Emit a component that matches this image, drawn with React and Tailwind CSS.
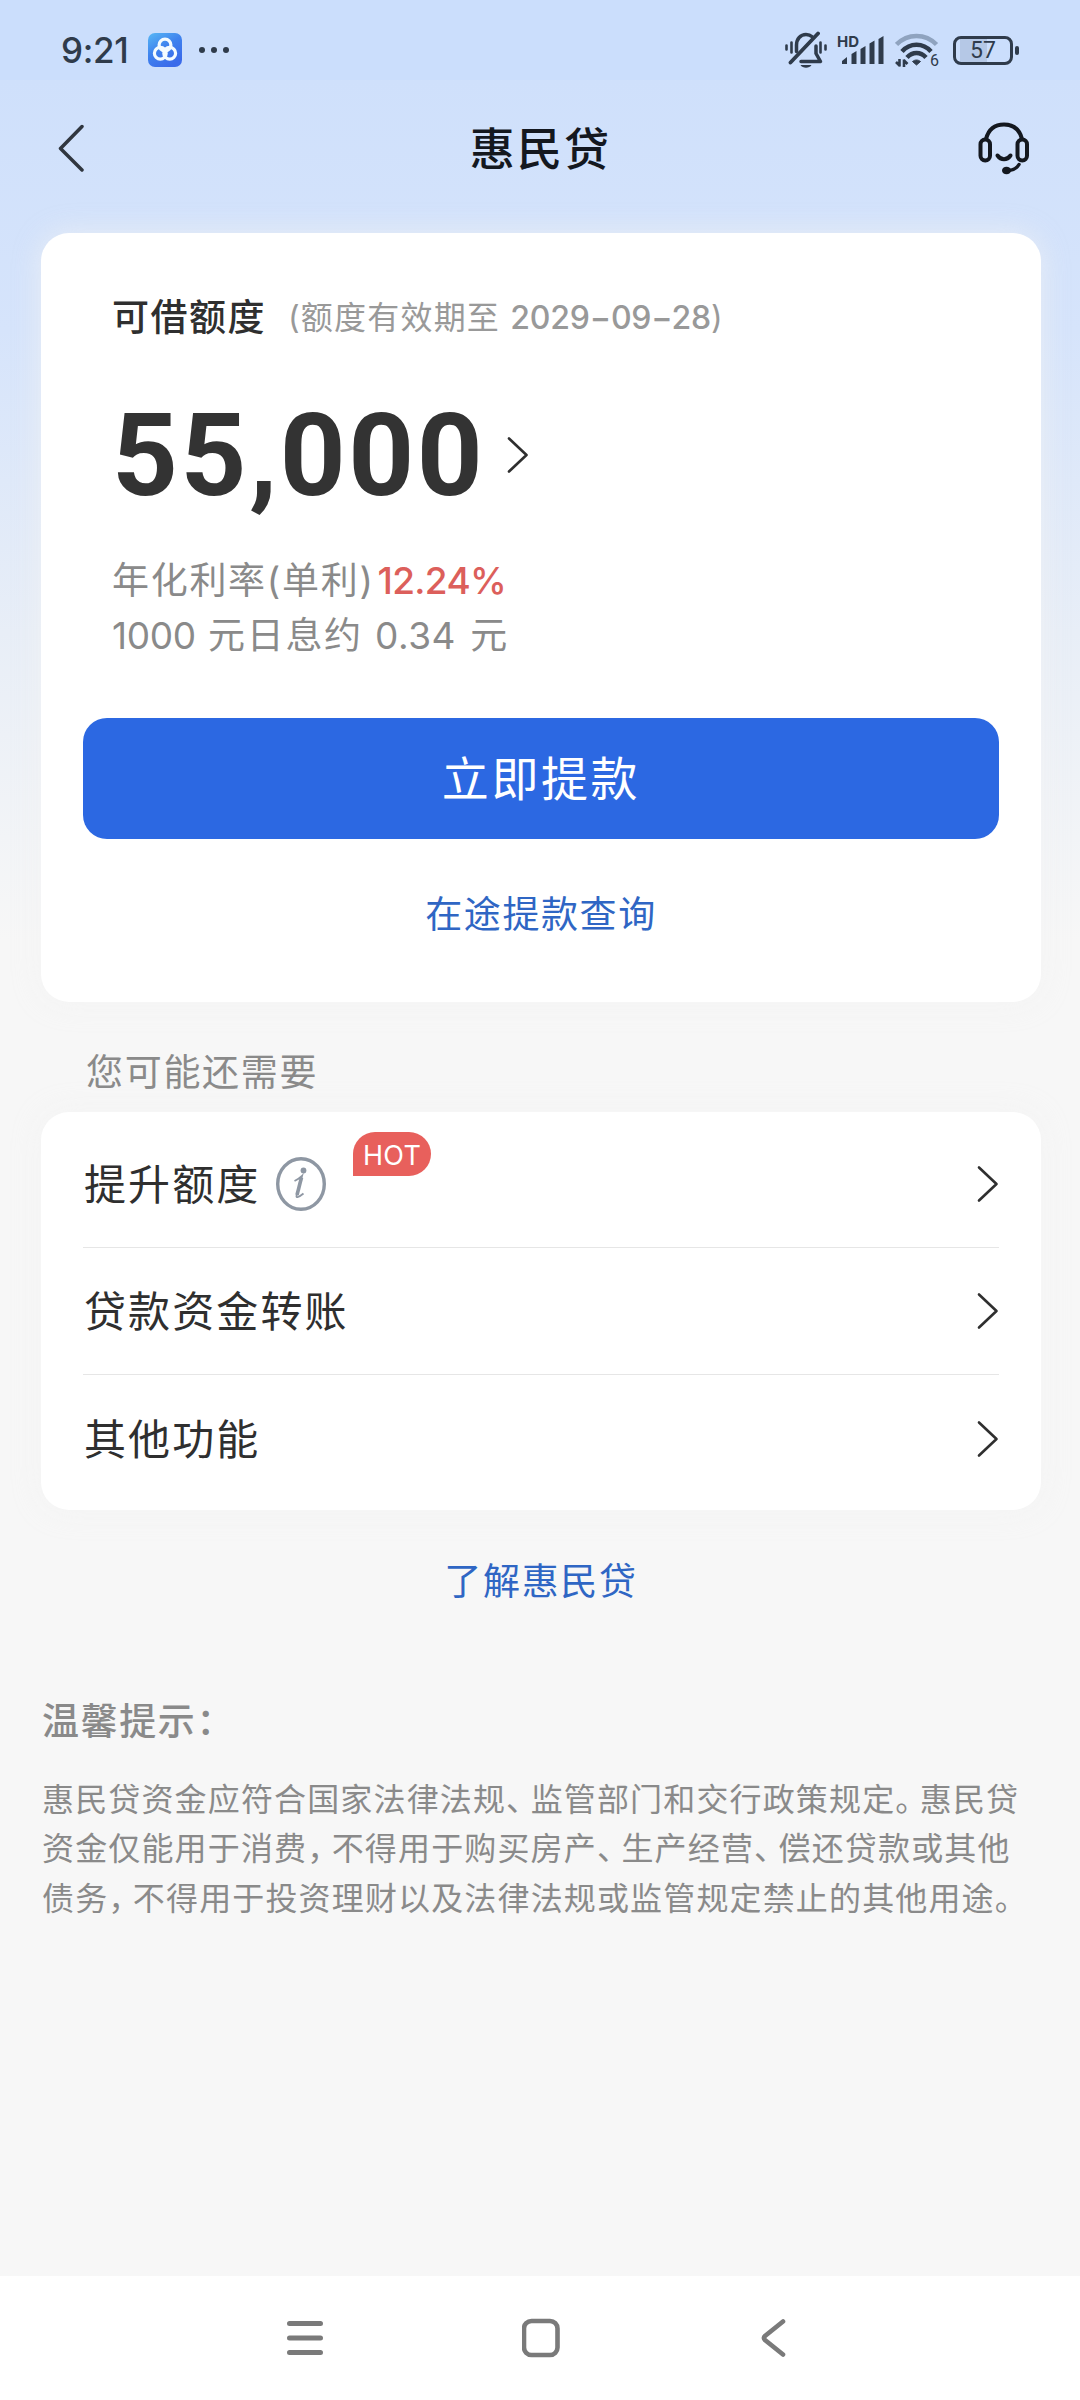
import React from 'react';

const latin = "font-['Inter','Noto_Sans_CJK_SC',sans-serif]";

const features = [
  { label: '提升额度', info: true, hot: true },
  { label: '贷款资金转账' },
  { label: '其他功能' },
];

const tips = [
  '惠民贷资金应符合国家法律法规、监管部门和交行政策规定。惠民贷',
  '资金仅能用于消费，不得用于购买房产、生产经营、偿还贷款或其他',
  '债务，不得用于投资理财以及法律法规或监管规定禁止的其他用途。',
];

const AppLogo = () => (
  <svg width="34" height="34" viewBox="0 0 34 34" fill="none">
    <defs>
      <linearGradient id="logo" x1="0" y1="0" x2="20" y2="34" gradientUnits="userSpaceOnUse">
        <stop stopColor="#58b8f5" />
        <stop offset="0.5" stopColor="#3f83ee" />
        <stop offset="1" stopColor="#3a6aea" />
      </linearGradient>
    </defs>
    <rect width="34" height="34" rx="7" fill="url(#logo)" />
    <g stroke="#f4fbff" strokeWidth="3.200">
      <circle cx="17" cy="12" r="5.900" />
      <circle cx="12.300" cy="20.300" r="5.900" />
      <circle cx="21.700" cy="20.300" r="5.900" />
    </g>
  </svg>
);

const MutedBell = () => (
  <svg width="42" height="38" viewBox="0 0 42 38" fill="none" stroke="#2f3b4b" strokeWidth="3.500" strokeLinecap="round">
    <path d="M11.500 20.500V14c0-6 4-10.500 9.500-10.500 2.400 0 4.600.8 6.200 2.200" />
    <path d="M31 15v7.500l4.500 8H16" strokeLinejoin="round" />
    <path d="M5.500 31.500L33 2.500" strokeWidth="3.800" />
    <path d="M1.500 14.500v4M6.500 11.500v10M35.500 11.500v10M40.500 14.500v4" strokeWidth="2.600" />
    <path d="M15.500 34h11c-2 3.500-9 3.500-11 0z" fill="#2f3b4b" stroke="none" />
  </svg>
);

const Signal = () => (
  <svg width="48" height="34" viewBox="0 0 48 34" fill="#2f3b4b">
    <text x="0" y="13.500" fontSize="15" fontWeight="700" fontFamily="Inter, sans-serif">HD</text>
    <path d="M5 28l5-4v7H5zM14.500 21l5-3v13h-5zM23.500 16l5-3v18h-5zM32.500 10.500l5-3V31h-5zM41.500 6l5-3v28h-5z" />
  </svg>
);

const Wifi = () => (
  <svg width="48" height="38" viewBox="0 0 48 38" fill="none" strokeWidth="4.500">
    <path d="M1.500 12.500c11-11.500 29-11.500 40 0" stroke="#8fa3bf" />
    <path d="M7 19.500c8-9 21-9 29 0" stroke="#2f3b4b" />
    <path d="M12 25.500c5.500-6 13.500-6 19 0" stroke="#2f3b4b" />
    <path d="M17.500 29.500c2.500-2 5.500-2 8 0l-4 3.500z" fill="#2f3b4b" stroke="#2f3b4b" strokeWidth="1" />
    <path d="M4.500 27v7.500M5 34L1 30M9 35v-7.500M8.500 28l4 4" stroke="#2f3b4b" strokeWidth="2.600" />
    <text x="35" y="34" fontSize="16" fill="#2f3b4b" fontFamily="Roboto, sans-serif">6</text>
  </svg>
);

const Battery = () => (
  <div className="flex items-center">
    <div className="flex h-[29px] w-[60px] items-center justify-center rounded-[8px] border-[3px] border-[#2f3b4b] bg-[linear-gradient(90deg,transparent_4px,#b5c8e6_4px,#b5c8e6_31px,transparent_31px)]">
      <span className="font-[Roboto,sans-serif] text-[23px] leading-none text-[#2f3b4b]">57</span>
    </div>
    <div className="ml-[2px] h-[9px] w-[4px] rounded-[2px] bg-[#2f3b4b]" />
  </div>
);

const Headset = () => (
  <svg width="52" height="54" viewBox="0 0 52 54" fill="none" stroke="#14181f" strokeWidth="4" strokeLinecap="round">
    <path d="M8 18C10.500 8.500 17 3.500 26 3.500S41.500 8.500 44 18" />
    <rect x="2.500" y="18.500" width="9.500" height="21" rx="4.700" />
    <rect x="39.500" y="18.500" width="9.500" height="21" rx="4.700" />
    <path d="M19.500 34.500c3.500 5 9.500 5 13 0" />
    <path d="M41 43.500c-2 3.500-5.500 5.500-10 6" strokeWidth="3.500" />
    <ellipse cx="28.500" cy="49.500" rx="4.500" ry="3.800" fill="#14181f" stroke="none" />
  </svg>
);

const ChevronRight = () => (
  <svg width="22" height="38" viewBox="0 0 22 38" fill="none" stroke="#2f2f2f" strokeWidth="2.600" strokeLinecap="round" strokeLinejoin="round">
    <path d="M2 2.500l17.500 16.500L2 35.500" />
  </svg>
);

const InfoIcon = () => (
  <svg width="50" height="54" viewBox="0 0 50 54" fill="none" stroke="#8e97a3">
    <ellipse cx="25" cy="27" rx="23.300" ry="25.300" strokeWidth="3.400" />
    <circle cx="27.500" cy="13.500" r="2.900" fill="#8e97a3" stroke="none" />
    <path d="M18.500 24c3-1.500 5.500-3 7.500-5l-5.500 20c-.4 2 2 1.500 7-2.500" strokeWidth="1.800" />
    <path d="M25.500 20.500L21 38" strokeWidth="3.600" />
  </svg>
);

const StatusBar = () => (
  <div className="flex h-20 items-center justify-between bg-[#cbdefc] pt-5 pr-[61px] pl-[61px]">
    <div className="flex items-center">
      <span className={`${latin} w-[87px] text-[35px] leading-none font-medium tracking-[-0.300px] text-[#2f3b4b]`}>9:21</span>
      <AppLogo />
      <div className="ml-[17px] flex gap-[6px]">
        <span className="size-[6px] rounded-full bg-[#2f3b4b]" />
        <span className="size-[6px] rounded-full bg-[#2f3b4b]" />
        <span className="size-[6px] rounded-full bg-[#2f3b4b]" />
      </div>
    </div>
    <div className="flex items-center">
      <MutedBell />
      <div className="ml-[10px]"><Signal /></div>
      <div className="mt-[2px] ml-[10px]"><Wifi /></div>
      <div className="ml-[10px]"><Battery /></div>
    </div>
  </div>
);

const Header = () => (
  <header className="grid h-[136px] grid-cols-[1fr_auto_1fr] items-center pr-[50px] pl-[58px]">
    <svg width="54" height="48" viewBox="0 0 54 48" fill="none" stroke="#30363f" strokeWidth="3.500" strokeLinecap="round" strokeLinejoin="round">
      <path d="M24 2.500L2.500 24.500 24 46" />
    </svg>
    <h1 className="mr-[7px] pb-[3px] text-[45px] font-medium tracking-[2.200px] text-[#14181f]">惠民贷</h1>
    <div className="justify-self-end"><Headset /></div>
  </header>
);

const LoanCard = () => (
  <section className="mt-[17px] mr-[39px] ml-[41px] flex h-[769px] flex-col rounded-[28px] bg-white px-[42px] pt-[55px] shadow-[0_0_28px_rgba(242,242,242,0.7)]">
    <div className="flex h-[56px] items-center pl-[29px] whitespace-pre">
      <span className="text-[37px] font-medium tracking-[1.500px] text-[#2f2f2f]">可借额度</span>
      <span className={`${latin} ml-[22px] pt-[4px] text-[32px] tracking-[1.200px] text-[#999]`}>
        (额度有效期至 <span className="font-medium tracking-[-0.200px]">2029−09−28</span>)
      </span>
    </div>
    <div className="mt-[41px] flex h-[136px] items-center pl-[29px]">
      <span className="pt-[5px] font-[Roboto,sans-serif] text-[115px] leading-none font-bold tracking-[2.500px] text-[#333]">55,000</span>
      <div className="ml-[22px] pt-[3px]"><ChevronRight /></div>
    </div>
    <div className={`${latin} mt-[32px] pl-[29px] text-[37px] leading-[55px] tracking-[1.700px] whitespace-pre text-[#8a8a8a]`}>
      <p>年化利率(单利)<span className="ml-[3px] font-medium tracking-[-0.700px] text-[#dc5f5b]">12.24%</span></p>
      <p><span className="tracking-[-0.300px]">1000</span> 元日息约 <span className="tracking-[0.600px]">0.34</span><span className="ml-[2px]"> 元</span></p>
    </div>
    <button className="mt-[55px] h-[121px] shrink-0 rounded-[24px] bg-[#2c68e2] pb-[4px] text-[47px] tracking-[2.600px] text-white">立即提款</button>
    <a className="mt-[45px] text-center text-[37px] leading-[56px] tracking-[1.600px] text-[#2f66c4]">在途提款查询</a>
  </section>
);

const FeatureRow = ({ label, info, hot }) => (
  <div className="relative flex h-[127px] items-center">
    <span className="pb-[5px] pl-[1px] text-[42px] tracking-[2.100px] text-[#2f2f2f]">{label}</span>
    {info && <div className="ml-[16px]"><InfoIcon /></div>}
    {hot && (
      <span className={`${latin} absolute top-[11px] left-[270px] flex h-[44px] w-[78px] items-center justify-center rounded-[22px] rounded-bl-none bg-[#e8605c] pt-[2px] text-[27px] leading-none tracking-[0.300px] text-white`}>
        HOT
      </span>
    )}
    <div className="ml-auto"><ChevronRight /></div>
  </div>
);

const Tips = () => (
  <section className="mt-[84px] pl-[42px] text-[#8a8a8a]">
    <h2 className="text-[37px] leading-[56px] font-medium tracking-[1.600px]">温馨提示：</h2>
    <div className="mt-[26px] text-[32px] leading-[49.300px] tracking-[1.150px] whitespace-nowrap">
      {tips.map((line) => (
        <p key={line}>
          {/* punctuation takes three quarters of a full-width cell */}
          {line.split(/([、，。])/).map((part, i) =>
            i % 2 ? <span key={i} className="tracking-[-7.500px]">{part}</span> : part
          )}
        </p>
      ))}
    </div>
  </section>
);

const NavBar = () => (
  <nav className="mt-auto flex h-[124px] items-center justify-between bg-white pr-[282px] pl-[286px]">
    <svg width="38" height="40" viewBox="0 0 38 40" stroke="#7a7a7a" strokeWidth="5" strokeLinecap="round">
      <path d="M3.500 5.500h31M3.500 20h31M3.500 34.500h31" />
    </svg>
    <svg width="40" height="40" viewBox="0 0 40 40" fill="none" stroke="#7a7a7a" strokeWidth="4.600">
      <rect x="2" y="3" width="33.500" height="34" rx="7.500" />
    </svg>
    <svg width="38" height="40" viewBox="0 0 38 40" fill="none" stroke="#7a7a7a" strokeWidth="4.600" strokeLinecap="round">
      <path d="M23 3.500L5 18q-2 2 0 4l18 14.500" />
    </svg>
  </nav>
);

export default function App() {
  return (
    <div className="flex h-[2400px] w-[1080px] flex-col overflow-hidden bg-[#f7f7f7] bg-[linear-gradient(180deg,#cfe0fb_80px,#d6e4fb_330px,#e8eef7_632px,#f7f7f7_940px)] font-['Noto_Sans_CJK_SC',sans-serif]">
      <StatusBar />
      <Header />
      <LoanCard />
      <p className="mt-[40px] pl-[86px] text-[37px] leading-[56px] tracking-[1.700px] text-[#8a8a8a]">您可能还需要</p>
      <section className="mt-[14px] mr-[39px] ml-[41px] h-[398px] rounded-[28px] bg-white px-[42px] pt-[9px] shadow-[0_0_28px_rgba(242,242,242,0.7)]">
        <div className="divide-y divide-[#e6e6e6]">
          {features.map((f) => (
            <FeatureRow key={f.label} {...f} />
          ))}
        </div>
      </section>
      <a className="mt-[41px] pl-[2px] text-center text-[37px] leading-[56px] tracking-[1.700px] text-[#2f66c4]">了解惠民贷</a>
      <Tips />
      <NavBar />
    </div>
  );
}
